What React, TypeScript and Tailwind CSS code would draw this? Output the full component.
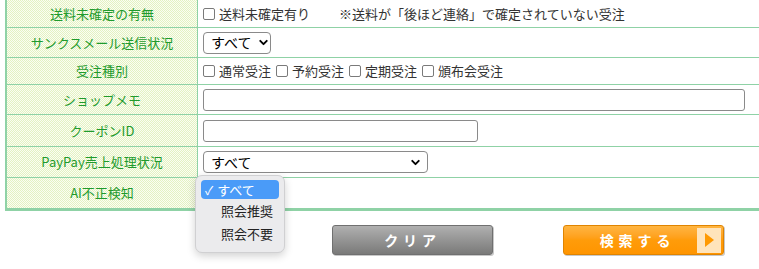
import { ChevronDown } from 'lucide-react'

const labelBg =
  'bg-[#f0f8dc] bg-[image:repeating-conic-gradient(#e3f2c2_0_25%,#fbfdf3_0_50%)] bg-[length:2px_2px]'

function Row({
  label,
  h,
  children,
  last,
}: {
  label: string
  h: string
  children: React.ReactNode
  last?: boolean
}) {
  return (
    <div className={`flex ${last ? '' : 'border-b border-[#8fd2a6]'} ${h}`}>
      <div
        className={`w-[191px] shrink-0 flex items-center justify-center border-r border-[#8fd2a6] text-[13px] text-[#1f9b2c] ${labelBg}`}
      >
        {label}
      </div>
      <div className="flex flex-1 items-center pl-[5px] text-[13px] text-[#333]">{children}</div>
    </div>
  )
}

function Check({ label }: { label: string }) {
  return (
    <label className="mr-[5px] flex items-center whitespace-nowrap">
      <input
        type="checkbox"
        className="mr-[4px] h-[12px] w-[12px] appearance-none rounded-[2px] border border-[#7a7a7a] bg-white"
      />
      {label}
    </label>
  )
}

function Select({ w, focused, text = 'すべて' }: { w: string; focused?: boolean; text?: string }) {
  return (
    <div
      className={`flex h-[22px] items-center justify-between gap-[6px] whitespace-nowrap rounded-[4px] bg-white pl-[7px] pr-[5px] text-[14px] text-black ${w} ${
        focused ? 'border-2 border-[#2f6fe0]' : 'border border-[#8a8a8a]'
      }`}
    >
      <span>{text}</span>
      <ChevronDown className="h-[13px] w-[13px] shrink-0" strokeWidth={3.5} />
    </div>
  )
}

export default function App() {
  return (
    <div
      className="h-[269px] w-[759px] overflow-hidden bg-white"
      style={{ fontFamily: '"Noto Sans CJK JP", "Noto Sans", sans-serif' }}
    >
      <div className="ml-[5px] w-[800px] border-b-[3px] border-l-[2px] border-[#8fd2a6]">
        <Row label="送料未確定の有無" h="h-[28px]">
          <Check label="送料未確定有り" />
          <span className="ml-[24px] whitespace-nowrap">※送料が「後ほど連絡」で確定されていない受注</span>
        </Row>
        <Row label="サンクスメール送信状況" h="h-[30px]">
          <Select w="w-[68px]" />
        </Row>
        <Row label="受注種別" h="h-[27px]">
          <Check label="通常受注" />
          <Check label="予約受注" />
          <Check label="定期受注" />
          <Check label="頒布会受注" />
        </Row>
        <Row label="ショップメモ" h="h-[30px]">
          <input className="h-[22px] w-[542px] rounded-[3px] border border-[#8a8a8a] bg-white" />
        </Row>
        <Row label="クーポンID" h="h-[32px]">
          <input className="h-[22px] w-[275px] rounded-[3px] border border-[#8a8a8a] bg-white" />
        </Row>
        <Row label="PayPay売上処理状況" h="h-[31px]">
          <Select w="w-[225px]" />
        </Row>
        <Row label="AI不正検知" h="h-[30px]" last>
          <div className="relative">
            <Select w="w-[82px]" focused text="" />
            <div className="absolute left-[-8px] top-[-7px] z-10 w-[90px] rounded-[7px] border border-[#d0d0d2] bg-[#ebebed] px-[5px] pb-[7px] pt-[4px] text-[13px] text-[#222] shadow-[0_3px_8px_rgba(0,0,0,0.18)]">
              <div className="flex h-[19px] items-center rounded-[4px] bg-[#4a9bf8] pl-[4px] text-white">
                <span className="mr-[4px] text-[12px]">✓</span>すべて
              </div>
              <div className="flex h-[24px] items-center pl-[20px]">照会推奨</div>
              <div className="flex h-[22px] items-center pl-[20px]">照会不要</div>
            </div>
          </div>
        </Row>
      </div>

      <div className="mt-[14px] flex pl-[332px]">
        <button className="flex h-[30px] w-[161px] items-center justify-center rounded-[3px] border border-[#707070] bg-gradient-to-b from-[#b0b0b0] to-[#7a7a79] text-[14px] font-bold tracking-[0.35em] text-white shadow-[1px_1px_0_#c8c8c8]">
          クリア
        </button>
        <button className="ml-[70px] flex h-[30px] w-[161px] items-center rounded-[3px] border border-[#e08400] bg-gradient-to-b from-[#ffb540] via-[#ff9c0a] to-[#ff9500] pr-[2px] text-[14px] font-bold text-white shadow-[1px_1px_0_#c8c8c8]">
          <span className="flex-1 pl-[14px] text-center tracking-[0.35em]">検索する</span>
          <span className="flex h-[25px] w-[24px] items-center justify-center bg-[#ffe4bb]">
            <span className="h-0 w-0 border-y-[7px] border-l-[9px] border-y-transparent border-l-[#ff9900]" />
          </span>
        </button>
      </div>
    </div>
  )
}
